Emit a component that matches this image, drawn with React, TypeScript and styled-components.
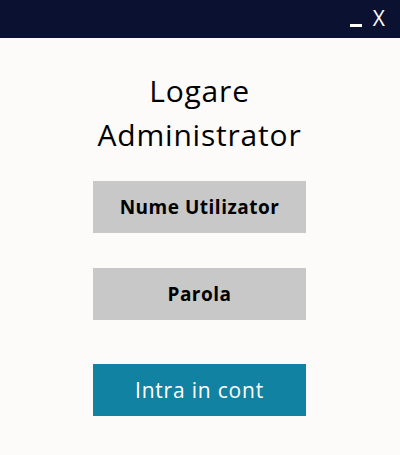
import React from "react";
import styled, { createGlobalStyle } from "styled-components";

const Global = createGlobalStyle`
  html, body { margin: 0; padding: 0; background: #fcfbfa; }
  body { font-family: "Open Sans", "Noto Sans", sans-serif; }
  * { box-sizing: border-box; }
`;

const Window = styled.div`
  width: 400px;
  height: 455px;
  display: flex;
  flex-direction: column;
  background: #fcfbfa;
`;

const TitleBar = styled.div`
  height: 38px;
  flex-shrink: 0;
  background: #0b1130;
  display: flex;
  justify-content: flex-end;
  align-items: flex-start;
  padding-right: 15px;
  gap: 11px;
`;

const WinButton = styled.span`
  color: #ffffff;
  font-family: "Open Sans", sans-serif;
  font-size: 21px;
  line-height: 38px;
  height: 38px;
  margin-top: -1px;
`;

const Minimize = styled.span`
  display: block;
  width: 12px;
  height: 3px;
  background: #ffffff;
  margin-top: 24px;
`;

const Content = styled.div`
  display: flex;
  flex-direction: column;
  align-items: center;
  padding-top: 31px;
  padding-right: 1px;
`;

const Title = styled.h1`
  margin: 0;
  font-weight: 400;
  font-size: 30px;
  letter-spacing: 0.8px;
  line-height: 44px;
  color: #000;
  text-align: center;
`;

const Field = styled.div<{ $top: number }>`
  width: 213px;
  height: 52px;
  margin-top: ${(p) => p.$top}px;
  background: #c8c8c8;
  display: flex;
  align-items: center;
  justify-content: center;
  font-size: 19px;
  font-weight: 700;
  letter-spacing: 0.5px;
  color: #000;
`;

const Submit = styled.button`
  width: 213px;
  height: 52px;
  margin-top: 44px;
  border: none;
  background: #1282a2;
  color: #ffffff;
  font-family: "Open Sans", sans-serif;
  font-size: 21px;
  font-weight: 400;
  letter-spacing: 0.8px;
  display: flex;
  align-items: center;
  justify-content: center;
  padding: 0;
`;

export default function App() {
  return (
    <>
      <Global />
      <Window>
        <TitleBar>
          <Minimize />
          <WinButton>X</WinButton>
        </TitleBar>
        <Content>
          <Title>
            Logare
            <br />
            Administrator
          </Title>
          <Field $top={24}>Nume Utilizator</Field>
          <Field $top={35}>Parola</Field>
          <Submit>Intra in cont</Submit>
        </Content>
      </Window>
    </>
  );
}
